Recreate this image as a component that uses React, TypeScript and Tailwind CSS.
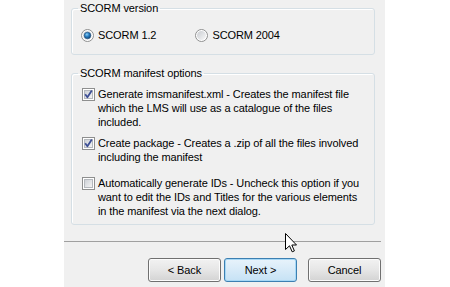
import React, { useId } from 'react';

const Radio: React.FC<{ checked?: boolean }> = ({ checked }) => {
  const id = useId();
  return (
    <svg width="13" height="13" viewBox="0 0 13 13" className="shrink-0">
      <defs>
        <linearGradient id={`${id}-ring`} x1="0" y1="0" x2="1" y2="1">
          <stop offset="0" stopColor="#c9ccd1" />
          <stop offset="1" stopColor="#f8f8f8" />
        </linearGradient>
        <radialGradient id={`${id}-dot`} cx="0.4" cy="0.35" r="0.7">
          <stop offset="0" stopColor="#8fd0f5" />
          <stop offset="0.45" stopColor="#2a80c4" />
          <stop offset="1" stopColor="#0d3e6e" />
        </radialGradient>
      </defs>
      <circle cx="6.5" cy="6.5" r="6" fill="#fff" stroke="#8e8f8f" />
      <circle cx="6.5" cy="6.5" r="4.5" fill={`url(#${id}-ring)`} />
      {checked && <circle cx="6.5" cy="6.5" r="3.3" fill={`url(#${id}-dot)`} stroke="#1c4f7c" strokeWidth="0.6" />}
    </svg>
  );
};

const Checkbox: React.FC<{ checked?: boolean }> = ({ checked }) => {
  const id = useId();
  return (
    <svg width="13" height="13" viewBox="0 0 13 13" className="shrink-0">
      <defs>
        <linearGradient id={`${id}-box`} x1="0" y1="0" x2="1" y2="1">
          <stop offset="0" stopColor="#cbcfd5" />
          <stop offset="1" stopColor="#f6f6f6" />
        </linearGradient>
      </defs>
      <rect x="0.5" y="0.5" width="12" height="12" fill="#fff" stroke="#8e8f8f" />
      <rect x="2.5" y="2.5" width="8" height="8" fill={`url(#${id}-box)`} stroke="#b4b8bd" />
      {checked && (
        <path d="M3.2 6.2 L5.4 9.2 L9.8 2.6" fill="none" stroke="#3d4f95" strokeWidth="1.8" strokeLinejoin="round" />
      )}
    </svg>
  );
};

const Option: React.FC<{ checked?: boolean; lines: string[]; className?: string }> = ({ checked, lines, className }) => (
  <div className={`flex items-start gap-[3px] pl-[10px] ${className ?? ''}`}>
    <div className="pt-[1px]">
      <Checkbox checked={checked} />
    </div>
    <div className="leading-[14px] whitespace-nowrap">
      {lines.map((l) => (
        <div key={l}>{l}</div>
      ))}
    </div>
  </div>
);

const Button: React.FC<{ label: string; primary?: boolean; className?: string }> = ({ label, primary, className }) => (
  <button
    className={`h-[24px] w-[73px] rounded-[3px] border text-[11px] text-black ${
      primary
        ? 'border-[#3c7fb1] bg-gradient-to-b from-[#e8f3fb] to-[#c6e2f5] shadow-[inset_0_0_0_1px_#a6d8f6]'
        : 'border-[#707070] bg-gradient-to-b from-[#f2f2f2] via-[#e6e6e6] to-[#d3d3d3] shadow-[inset_0_0_0_1px_#fcfcfc]'
    } ${className ?? ''}`}
  >
    {label}
  </button>
);

export default function App() {
  return (
    <div
      className="relative h-[287px] w-[450px] overflow-hidden bg-white text-[11px] tracking-[-0.1px] text-black"
      style={{ fontFamily: '"Liberation Sans", Arial, sans-serif' }}
    >
      <div className="ml-[64px] flex h-full w-[321px] flex-col bg-[#f0f0f0]">
        {/* SCORM version */}
        <fieldset className="ml-[7px] mt-[2px] w-[304px] rounded-[3px] border border-[#d5dfe5] pb-[12px] pt-[13px] shadow-[inset_1px_1px_0_#fff]">
          <legend className="ml-[6px] px-[2px] leading-[13px]">SCORM version</legend>
          <div className="flex items-center leading-[14px]">
            <div className="flex items-center gap-[4px] pl-[9px]">
              <Radio checked />
              <span>SCORM 1.2</span>
            </div>
            <div className="ml-[39px] flex items-center gap-[4px]">
              <Radio />
              <span>SCORM 2004</span>
            </div>
          </div>
        </fieldset>

        {/* SCORM manifest options */}
        <fieldset className="ml-[7px] mt-[12px] w-[304px] rounded-[3px] border border-[#d5dfe5] pb-[6px] pt-[7px] shadow-[inset_1px_1px_0_#fff]">
          <legend className="ml-[6px] px-[2px] leading-[13px]">SCORM manifest options</legend>
          <Option
            checked
            lines={[
              'Generate imsmanifest.xml - Creates the manifest file',
              'which the LMS will use as a catalogue of the files',
              'included.',
            ]}
          />
          <Option
            checked
            className="mt-[7px]"
            lines={['Create package - Creates a .zip of all the files involved', 'including the manifest']}
          />
          <Option
            className="mt-[12px]"
            lines={[
              'Automatically generate IDs - Uncheck this option if you',
              'want to edit the IDs and Titles for the various elements',
              'in the manifest via the next dialog.',
            ]}
          />
        </fieldset>

        <div className="mr-[4px] mt-[16px] h-px bg-[#a0a0a0]" />

        <div className="mt-[16px] flex justify-end pr-[4px]">
          <Button label="< Back" />
          <Button label="Next >" primary className="ml-[3px]" />
          <Button label="Cancel" className="ml-[11px]" />
        </div>
      </div>

      {/* mouse pointer */}
      <svg width="13" height="20" viewBox="0 0 13 20" className="absolute left-[285px] top-[233px]">
        <path
          d="M0.5 0.5 L0.5 16.5 L4.5 12.8 L7.2 18.8 L9.4 17.9 L6.8 12 L11.5 12 Z"
          fill="#fff"
          stroke="#000"
          strokeWidth="1"
          strokeLinejoin="miter"
        />
      </svg>
    </div>
  );
}
